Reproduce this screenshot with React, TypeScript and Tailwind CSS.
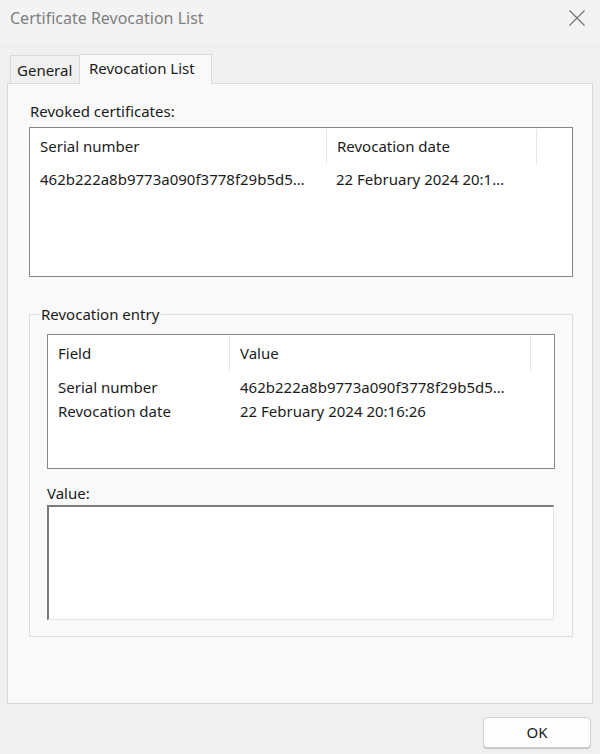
import React from 'react';

const font = { fontFamily: '"Noto Sans", "Open Sans", sans-serif' };

function Header({ cols }: { cols: { label: string; w: string }[] }) {
  return (
    <div className="flex h-[37px]">
      {cols.map((c) => (
        <div key={c.label} className={`${c.w} flex items-center`}>
          <div className="flex-1 pl-[10px] whitespace-nowrap">{c.label}</div>
          <div className="w-px h-[35px] bg-[#e5e5e5]" />
        </div>
      ))}
    </div>
  );
}

export default function App() {
  return (
    <div className="w-[600px] h-[754px] bg-[#f0f0f0] flex flex-col text-[15px] text-[#1b1b1b]" style={font}>
      {/* title bar */}
      <div className="h-[42px] bg-[#f3f3f3] flex items-center justify-between pl-[10px] pr-[15px] pb-[6px]">
        <span className="text-[16px] text-[#7f7f7f]">Certificate Revocation List</span>
        <svg width="16" height="16" viewBox="0 0 16 16">
          <path d="M0.5 0.5 L15.5 15.5 M15.5 0.5 L0.5 15.5" stroke="#6f6f6f" strokeWidth="1.1" fill="none" />
        </svg>
      </div>

      {/* tabs */}
      <div className="pt-[11px] px-[7px]">
        <div className="flex items-end pl-[3px] h-[30px]">
          <div className="w-[70px] h-[28px] border border-[#dadada] border-b-0 bg-[#f0f0f0] flex items-center pl-[6px] pt-[1px]">
            General
          </div>
          <div className="w-[132px] h-[30px] border border-[#dadada] border-b-0 border-l-0 bg-[#f9f9f9] flex items-center pl-[9px] pb-[3px] -mb-px relative">
            Revocation List
          </div>
        </div>

        {/* panel */}
        <div className="h-[621px] border border-[#dadada] bg-[#f9f9f9] flex flex-col">
          <div className="pl-[22px] pt-[17px] leading-[20px]">Revoked certificates:</div>
          <div className="ml-[21px] mt-[6px] w-[544px] h-[150px] border border-[#868686] bg-white flex flex-col">
            <Header cols={[{ label: 'Serial number', w: 'w-[297px]' }, { label: 'Revocation date', w: 'w-[210px]' }]} />
            <div className="flex h-[24px] mt-[2px] items-center whitespace-nowrap">
              <div className="w-[297px] pl-[10px]">462b222a8b9773a090f3778f29b5d5…</div>
              <div className="pl-[9px]">22 February 2024 20:1…</div>
            </div>
          </div>

          {/* group box */}
          <div className="ml-[21px] mt-[37px] w-[544px] h-[323px] border border-[#dcdcdc] relative flex flex-col">
            <div className="absolute left-[9px] -top-[11px] px-[2px] bg-[#f9f9f9] leading-[20px]">Revocation entry</div>
            <div className="ml-[17px] mt-[19px] w-[508px] h-[135px] border border-[#868686] bg-white flex flex-col">
              <Header cols={[{ label: 'Field', w: 'w-[182px]' }, { label: 'Value', w: 'w-[301px]' }]} />
              <div className="mt-[3px] flex flex-col whitespace-nowrap">
                <div className="flex h-[24px] items-center">
                  <div className="w-[182px] pl-[10px]">Serial number</div>
                  <div className="pl-[10px]">462b222a8b9773a090f3778f29b5d5…</div>
                </div>
                <div className="flex h-[24px] items-center">
                  <div className="w-[182px] pl-[10px]">Revocation date</div>
                  <div className="pl-[10px]">22 February 2024 20:16:26</div>
                </div>
              </div>
            </div>
            <div className="ml-[17px] mt-[14px] leading-[20px]">Value:</div>
            <div className="ml-[17px] mt-[2px] w-[507px] h-[115px] bg-white border-t-2 border-l-2 border-[#7a7a7a] border-r border-b border-r-[#e3e3e3] border-b-[#e3e3e3]" />
          </div>
        </div>
      </div>

      {/* buttons */}
      <div className="flex justify-end pr-[9px] pt-[13px]">
        <div className="w-[108px] h-[31px] rounded-[4px] border border-[#d0d0d0] bg-[#fdfdfd] flex items-center justify-center shadow-[0_1px_0_#c4c4c4]">
          OK
        </div>
      </div>
    </div>
  );
}
